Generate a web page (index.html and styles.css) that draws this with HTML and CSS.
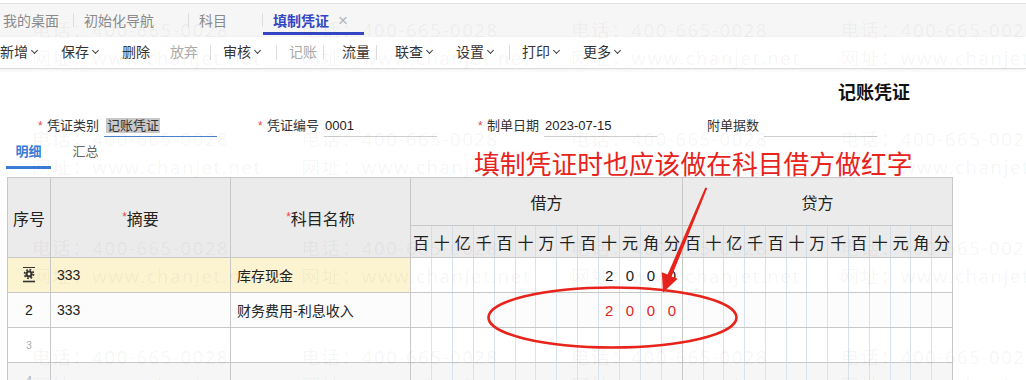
FILE: index.html
```html
<!DOCTYPE html>
<html lang="zh-CN">
<head>
<meta charset="utf-8">
<title>填制凭证</title>
<link rel="stylesheet" href="styles.css">
</head>
<body>
<div class="app">
  <div class="tabbar">
    <div class="tab tab-home">我的桌面</div>
    <span class="tsep"></span>
    <div class="tab tab-guide">初始化导航</div>
    <span class="tsep"></span>
    <div class="tab tab-subj">科目</div>
    <span class="tsep"></span>
    <div class="tab tab-active">填制凭证<span class="close">×</span></div>
  </div>

  <div class="toolbar">
    <span class="tb">新增<i class="caret"></i></span>
    <span class="tb">保存<i class="caret"></i></span>
    <span class="tb">删除</span>
    <span class="tb off">放弃</span>
    <span class="sep"></span>
    <span class="tb">审核<i class="caret"></i></span>
    <span class="sep"></span>
    <span class="tb off">记账</span>
    <span class="sep tight"></span>
    <span class="tb">流量</span>
    <span class="sep tight"></span>
    <span class="tb">联查<i class="caret"></i></span>
    <span class="tb">设置<i class="caret"></i></span>
    <span class="sep"></span>
    <span class="tb">打印<i class="caret"></i></span>
    <span class="tb">更多<i class="caret"></i></span>
  </div>

  <div class="title-row"><h1 class="title">记账凭证</h1></div>

  <div class="form-row">
    <div class="field"><span class="req">*</span><span class="label">凭证类别</span><span class="input focus"><span class="sel">记账凭证</span></span></div>
    <div class="field"><span class="req">*</span><span class="label">凭证编号</span><span class="input">0001</span></div>
    <div class="field"><span class="req">*</span><span class="label">制单日期</span><span class="input">2023-07-15</span></div>
    <div class="field"><span class="req"></span><span class="label">附单据数</span><span class="input"></span></div>
  </div>

  <div class="subtabs">
    <span class="subtab on">明细</span>
    <span class="subtab">汇总</span>
  </div>

  <table class="voucher">
    <colgroup>
      <col class="c-no"><col class="c-sum"><col class="c-acc">
      <col class="c-d"><col class="c-d"><col class="c-d"><col class="c-d"><col class="c-d"><col class="c-d"><col class="c-d"><col class="c-d"><col class="c-d"><col class="c-d"><col class="c-d"><col class="c-d"><col class="c-d">
      <col class="c-c"><col class="c-c"><col class="c-c"><col class="c-c"><col class="c-c"><col class="c-c"><col class="c-c"><col class="c-c"><col class="c-c"><col class="c-c"><col class="c-c"><col class="c-c"><col class="c-c">
    </colgroup>
    <thead>
      <tr class="h1">
        <th rowspan="2">序号</th>
        <th rowspan="2"><span class="star">*</span>摘要</th>
        <th rowspan="2"><span class="star">*</span>科目名称</th>
        <th colspan="13" class="grp">借方</th>
        <th colspan="13" class="grp">贷方</th>
      </tr>
      <tr class="h2">
        <th class="d">百</th><th class="d">十</th><th class="d">亿</th><th class="d">千</th><th class="d">百</th><th class="d">十</th><th class="d">万</th><th class="d">千</th><th class="d">百</th><th class="d">十</th><th class="d">元</th><th class="d">角</th><th class="d last">分</th>
        <th class="d">百</th><th class="d">十</th><th class="d">亿</th><th class="d">千</th><th class="d">百</th><th class="d">十</th><th class="d">万</th><th class="d">千</th><th class="d">百</th><th class="d">十</th><th class="d">元</th><th class="d">角</th><th class="d last">分</th>
      </tr>
    </thead>
    <tbody>
      <tr class="r cur">
        <td class="no"><svg class="gear" width="14" height="18" viewBox="0 0 14 18"><line x1="1" y1="1.5" x2="13" y2="1.5" stroke="#333" stroke-width="1"/><circle cx="7" cy="8" r="3.6" fill="#333"/><circle cx="7" cy="8" r="4.4" fill="none" stroke="#333" stroke-width="1.8" stroke-dasharray="1.75 1.7"/><circle cx="7" cy="8" r="1.4" fill="#fcf3d0"/><line x1="1" y1="15.5" x2="13" y2="15.5" stroke="#333" stroke-width="1.6"/></svg></td>
        <td class="txt">333</td>
        <td class="txt">库存现金</td>
        <td class="d"></td><td class="d"></td><td class="d"></td><td class="d"></td><td class="d"></td><td class="d"></td><td class="d"></td><td class="d"></td><td class="d"></td><td class="d">2</td><td class="d">0</td><td class="d">0</td><td class="d last">0</td>
        <td class="d"></td><td class="d"></td><td class="d"></td><td class="d"></td><td class="d"></td><td class="d"></td><td class="d"></td><td class="d"></td><td class="d"></td><td class="d"></td><td class="d"></td><td class="d"></td><td class="d last"></td>
      </tr>
      <tr class="r alt">
        <td class="no">2</td>
        <td class="txt">333</td>
        <td class="txt">财务费用-利息收入</td>
        <td class="d"></td><td class="d"></td><td class="d"></td><td class="d"></td><td class="d"></td><td class="d"></td><td class="d"></td><td class="d"></td><td class="d"></td><td class="d red">2</td><td class="d red">0</td><td class="d red">0</td><td class="d last red">0</td>
        <td class="d"></td><td class="d"></td><td class="d"></td><td class="d"></td><td class="d"></td><td class="d"></td><td class="d"></td><td class="d"></td><td class="d"></td><td class="d"></td><td class="d"></td><td class="d"></td><td class="d last"></td>
      </tr>
      <tr class="r">
        <td class="no small">3</td>
        <td class="txt"></td>
        <td class="txt"></td>
        <td class="d"></td><td class="d"></td><td class="d"></td><td class="d"></td><td class="d"></td><td class="d"></td><td class="d"></td><td class="d"></td><td class="d"></td><td class="d"></td><td class="d"></td><td class="d"></td><td class="d last"></td>
        <td class="d"></td><td class="d"></td><td class="d"></td><td class="d"></td><td class="d"></td><td class="d"></td><td class="d"></td><td class="d"></td><td class="d"></td><td class="d"></td><td class="d"></td><td class="d"></td><td class="d last"></td>
      </tr>
      <tr class="r grey">
        <td class="no small">4</td>
        <td class="txt"></td>
        <td class="txt"></td>
        <td class="d"></td><td class="d"></td><td class="d"></td><td class="d"></td><td class="d"></td><td class="d"></td><td class="d"></td><td class="d"></td><td class="d"></td><td class="d"></td><td class="d"></td><td class="d"></td><td class="d last"></td>
        <td class="d"></td><td class="d"></td><td class="d"></td><td class="d"></td><td class="d"></td><td class="d"></td><td class="d"></td><td class="d"></td><td class="d"></td><td class="d"></td><td class="d"></td><td class="d"></td><td class="d last"></td>
      </tr>
    </tbody>
  </table>
</div>

<div class="annot">填制凭证时也应该做在科目借方做红字</div>

<svg class="marks" width="1026" height="380" viewBox="0 0 1026 380">
  <ellipse cx="612.5" cy="317.5" rx="124" ry="30" fill="none" stroke="#e8231c" stroke-width="2.6"/>
  <polygon fill="#e8231c" points="705.3,187.4 707.2,188.2 671.6,276.6 677.6,278.8 663,292.5 661.8,272.2 667.6,274.6"/>
</svg>

<div class="watermark">
  <div class="wm"><span>电话：400-665-0028</span><span>网址：www.chanjet.net</span></div>
  <div class="wm"><span>电话：400-665-0028</span><span>网址：www.chanjet.net</span></div>
  <div class="wm"><span>电话：400-665-0028</span><span>网址：www.chanjet.net</span></div>
  <div class="wm"><span>电话：400-665-0028</span><span>网址：www.chanjet.net</span></div>
  <div class="wm"><span>电话：400-665-0028</span><span>网址：www.chanjet.net</span></div>
  <div class="wm"><span>电话：400-665-0028</span><span>网址：www.chanjet.net</span></div>
  <div class="wm"><span>电话：400-665-0028</span><span>网址：www.chanjet.net</span></div>
  <div class="wm"><span>电话：400-665-0028</span><span>网址：www.chanjet.net</span></div>
  <div class="wm"><span>电话：400-665-0028</span><span>网址：www.chanjet.net</span></div>
  <div class="wm"><span>电话：400-665-0028</span><span>网址：www.chanjet.net</span></div>
  <div class="wm"><span>电话：400-665-0028</span><span>网址：www.chanjet.net</span></div>
  <div class="wm"><span>电话：400-665-0028</span><span>网址：www.chanjet.net</span></div>
  <div class="wm"><span>电话：400-665-0028</span><span>网址：www.chanjet.net</span></div>
  <div class="wm"><span>电话：400-665-0028</span><span>网址：www.chanjet.net</span></div>
  <div class="wm"><span>电话：400-665-0028</span><span>网址：www.chanjet.net</span></div>
  <div class="wm"><span>电话：400-665-0028</span><span>网址：www.chanjet.net</span></div>
</div>
</body>
</html>
```

FILE: styles.css
```css
* { box-sizing: border-box; }

html, body {
  margin: 0;
  padding: 0;
}

body {
  width: 1026px;
  height: 380px;
  overflow: hidden;
  position: relative;
  background: #fff;
  color: #333;
  font-family: "Liberation Sans", "Noto Sans CJK SC", sans-serif;
  font-size: 14px;
}

.app {
  width: 1026px;
}

/* ---------- top tab bar ---------- */
.tabbar {
  margin-top: 3px;
  height: 34px;
  border-top: 1px solid #e2e2e2;
  background: #f6f6f6;
  display: flex;
  align-items: flex-start;
}

.tab {
  padding: 7px 0 1px 10px;
  line-height: 20px;
  font-size: 14px;
  color: #8a8a8a;
  border-bottom: 3px solid transparent;
  white-space: nowrap;
}

.tab-home { width: 73px; padding-left: 3px; }
.tab-guide { width: 114px; }
.tab-subj { width: 73px; }
.tab-active {
  width: 101px;
  color: #3347c4;
  font-weight: bold;
  border-bottom-color: #3347c4;
}

.close {
  font-weight: normal;
  color: #b5b5b5;
  font-size: 17px;
  margin-left: 9px;
}

.tsep {
  width: 1px;
  height: 14px;
  margin-top: 9px;
  background: #dedede;
}

/* ---------- toolbar ---------- */
.toolbar {
  height: 32px;
  background: #fff;
  border-bottom: 1px solid #dcdcdc;
  box-shadow: 0 1px 3px rgba(0, 0, 0, 0.07);
  display: flex;
  align-items: center;
  margin-left: -10px;
  position: relative;
}

.tb {
  padding: 0 10px;
  line-height: 31px;
  font-size: 14px;
  color: #333;
  display: inline-flex;
  align-items: center;
  white-space: nowrap;
}

.tb.off { color: #ababab; }

.caret {
  display: inline-block;
  width: 5px;
  height: 5px;
  border-right: 1.6px solid #444;
  border-bottom: 1.6px solid #444;
  transform: rotate(45deg);
  margin: -4px 4px 0 4px;
}

.sep {
  width: 1px;
  height: 15px;
  background: #dcdcdc;
  margin: 0 2px;
}

.sep.tight { margin: 0 8px 0 -4px; }

/* ---------- title ---------- */
.title-row {
  padding-top: 12px;
  padding-right: 116px;
  text-align: right;
}

.title {
  margin: 0;
  font-size: 18px;
  line-height: 24px;
  font-weight: bold;
  color: #111;
}

/* ---------- form ---------- */
.form-row {
  margin-top: 11px;
  padding-left: 38px;
  display: flex;
}

.field {
  width: 220px;
  display: flex;
  align-items: flex-start;
  font-size: 13px;
  line-height: 20px;
}

.req {
  width: 9px;
  color: #e5484d;
  font-size: 12px;
}

.label {
  width: 52px;
  color: #333;
  white-space: nowrap;
}

.input {
  margin-left: 5px;
  width: 113px;
  height: 21px;
  border-bottom: 1px solid #cfcfcf;
  padding-left: 1px;
  color: #222;
  font-size: 13px;
}

.input.focus {
  border-bottom-color: #4a82c8;
  padding-left: 2px;
}

.sel {
  background: #c9c9c9;
  color: #333;
  padding: 0 1px;
}

/* ---------- sub tabs ---------- */
.subtabs {
  padding-top: 5px;
  padding-left: 6px;
  display: flex;
  gap: 12px;
}

.subtab {
  width: 45px;
  text-align: center;
  font-size: 13px;
  line-height: 20px;
  padding-bottom: 4px;
  border-bottom: 3px solid transparent;
  color: #666;
}

.subtab.on {
  color: #3a7bd5;
  font-weight: bold;
  border-bottom-color: #3a7bd5;
}

/* ---------- voucher table ---------- */
.voucher {
  margin: 8px 0 0 7px;
  width: 945px;
  table-layout: fixed;
  border-collapse: collapse;
  font-size: 14px;
}

.c-no { width: 43px; }
.c-sum { width: 180px; }
.c-acc { width: 180px; }
.c-d { width: 20.92px; }
.c-c { width: 20.77px; }

.voucher th {
  background: #ebebeb;
  border: 1px solid #c8c8c8;
  font-weight: normal;
  color: #222;
  font-size: 16px;
  padding: 0;
  text-align: center;
}

.voucher .h1 th { height: 48px; }
.voucher .h1 th[rowspan] { height: 80px; }
.voucher .h2 th { height: 32px; }

.voucher th.d {
  font-size: 16px;
  border-left-color: #d2dde8;
  border-right-color: #d2dde8;
}

.voucher th.d.last,
.voucher td.d.last {
  border-right-color: #c8c8c8;
}

.star {
  color: #e5484d;
  font-size: 12px;
  vertical-align: 4px;
}

.voucher td {
  height: 35px;
  border: 1px solid #c8c8c8;
  padding: 0;
  background: #fff;
}

.voucher td.no {
  text-align: center;
  font-size: 14px;
  color: #222;
}

.voucher td.no.small {
  font-size: 10px;
  color: #aaa;
}

.voucher td.txt {
  padding-left: 6px;
  color: #222;
}

.voucher td.d {
  text-align: center;
  font-size: 15px;
  color: #222;
  border-left-color: #d6e3ef;
  border-right-color: #d6e3ef;
}

.voucher td.d.red { color: #e0261d; }

.voucher tr.cur td.no,
.voucher tr.cur td.txt {
  background: #fcf3d0;
}

.voucher tr.alt td { background: #fcfcfc; }
.voucher tr.grey td { background: #f6f6f6; }

.gear {
  display: block;
  margin: 0 auto;
}

/* ---------- overlays ---------- */
.annot {
  position: absolute;
  left: 474px;
  top: 148px;
  font-family: "Noto Sans CJK SC", sans-serif;
  font-size: 25.8px;
  line-height: 30px;
  color: #e8231c;
  white-space: nowrap;
}

.marks {
  position: absolute;
  left: 0;
  top: 0;
  pointer-events: none;
}

.watermark {
  position: absolute;
  left: 32px;
  top: 19px;
  display: grid;
  grid-template-columns: repeat(4, 269.5px);
  grid-auto-rows: 109px;
  pointer-events: none;
}

.wm {
  display: flex;
  flex-direction: column;
  gap: 6px;
}

.wm span {
  font-family: "Noto Sans", "Noto Sans CJK SC", sans-serif;
  font-size: 18.5px;
  line-height: 22px;
  letter-spacing: 1.6px;
  color: rgba(0, 0, 0, 0.05);
  white-space: nowrap;
}
```
